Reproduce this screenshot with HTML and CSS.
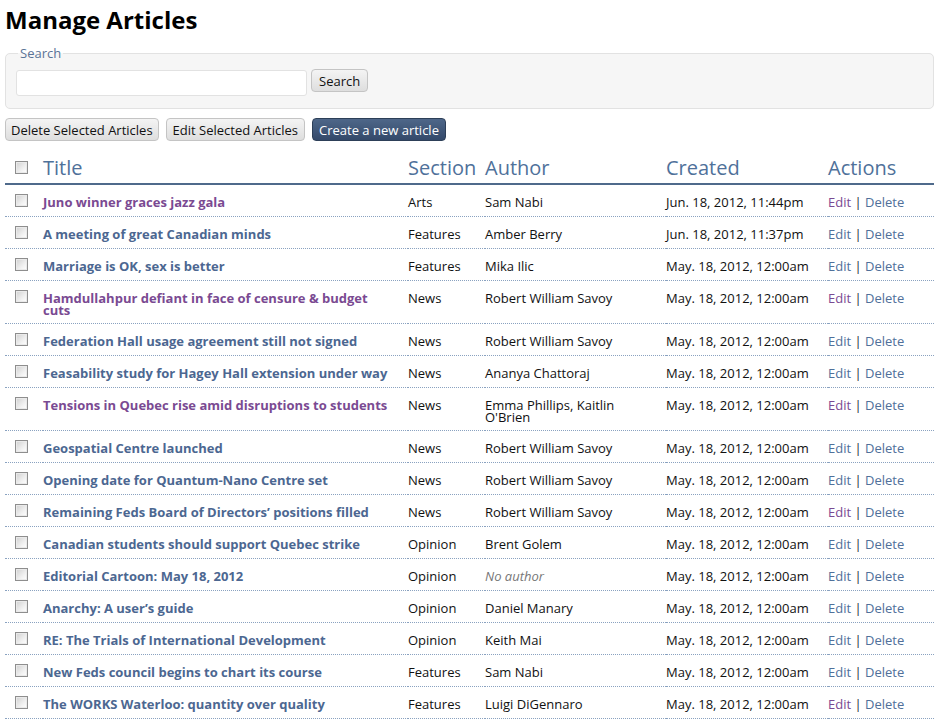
FILE: index.html
```html
<!DOCTYPE html>
<html>
<head>
<meta charset="utf-8">
<title>Manage Articles</title>
<link rel="stylesheet" href="styles.css">
</head>
<body>
<h1 class="page-title">Manage Articles</h1>
<fieldset class="search">
  <legend class="search-legend">Search</legend>
  <div class="search-row">
    <input class="search-input" type="text">
    <button class="btn btn-search" type="button">Search</button>
  </div>
</fieldset>
<div class="toolbar">
  <button class="btn btn-delete" type="button">Delete Selected Articles</button>
  <button class="btn" type="button">Edit Selected Articles</button>
  <button class="btn btn-primary" type="button">Create a new article</button>
</div>
<table class="articles">
  <colgroup>
    <col class="c-check"><col class="c-title"><col class="c-section"><col class="c-author"><col class="c-created"><col class="c-actions">
  </colgroup>
  <thead>
    <tr>
      <th class="cb-cell"><input class="cb" type="checkbox"></th>
      <th>Title</th><th>Section</th><th>Author</th><th>Created</th><th>Actions</th>
    </tr>
  </thead>
  <tbody>
    <tr><td class="cb-cell"><input class="cb" type="checkbox"></td><td><a class="title visited" href="#">Juno winner graces jazz gala</a></td><td>Arts</td><td>Sam Nabi</td><td>Jun. 18, 2012, 11:44pm</td><td><a class="act visited" href="#">Edit</a> <span class="pipe">|</span> <a class="act" href="#">Delete</a></td></tr>
    <tr><td class="cb-cell"><input class="cb" type="checkbox"></td><td><a class="title" href="#">A meeting of great Canadian minds</a></td><td>Features</td><td>Amber Berry</td><td>Jun. 18, 2012, 11:37pm</td><td><a class="act" href="#">Edit</a> <span class="pipe">|</span> <a class="act" href="#">Delete</a></td></tr>
    <tr><td class="cb-cell"><input class="cb" type="checkbox"></td><td><a class="title" href="#">Marriage is OK, sex is better</a></td><td>Features</td><td>Mika Ilic</td><td>May. 18, 2012, 12:00am</td><td><a class="act" href="#">Edit</a> <span class="pipe">|</span> <a class="act" href="#">Delete</a></td></tr>
    <tr><td class="cb-cell"><input class="cb" type="checkbox"></td><td><a class="title visited" href="#">Hamdullahpur defiant in face of censure &amp; budget cuts</a></td><td>News</td><td>Robert William Savoy</td><td>May. 18, 2012, 12:00am</td><td><a class="act visited" href="#">Edit</a> <span class="pipe">|</span> <a class="act" href="#">Delete</a></td></tr>
    <tr><td class="cb-cell"><input class="cb" type="checkbox"></td><td><a class="title" href="#">Federation Hall usage agreement still not signed</a></td><td>News</td><td>Robert William Savoy</td><td>May. 18, 2012, 12:00am</td><td><a class="act" href="#">Edit</a> <span class="pipe">|</span> <a class="act" href="#">Delete</a></td></tr>
    <tr><td class="cb-cell"><input class="cb" type="checkbox"></td><td><a class="title" href="#">Feasability study for Hagey Hall extension under way</a></td><td>News</td><td>Ananya Chattoraj</td><td>May. 18, 2012, 12:00am</td><td><a class="act" href="#">Edit</a> <span class="pipe">|</span> <a class="act" href="#">Delete</a></td></tr>
    <tr><td class="cb-cell"><input class="cb" type="checkbox"></td><td><a class="title visited" href="#">Tensions in Quebec rise amid disruptions to students</a></td><td>News</td><td>Emma Phillips, Kaitlin O'Brien</td><td>May. 18, 2012, 12:00am</td><td><a class="act visited" href="#">Edit</a> <span class="pipe">|</span> <a class="act" href="#">Delete</a></td></tr>
    <tr><td class="cb-cell"><input class="cb" type="checkbox"></td><td><a class="title" href="#">Geospatial Centre launched</a></td><td>News</td><td>Robert William Savoy</td><td>May. 18, 2012, 12:00am</td><td><a class="act" href="#">Edit</a> <span class="pipe">|</span> <a class="act" href="#">Delete</a></td></tr>
    <tr><td class="cb-cell"><input class="cb" type="checkbox"></td><td><a class="title" href="#">Opening date for Quantum-Nano Centre set</a></td><td>News</td><td>Robert William Savoy</td><td>May. 18, 2012, 12:00am</td><td><a class="act" href="#">Edit</a> <span class="pipe">|</span> <a class="act" href="#">Delete</a></td></tr>
    <tr><td class="cb-cell"><input class="cb" type="checkbox"></td><td><a class="title" href="#">Remaining Feds Board of Directors’ positions filled</a></td><td>News</td><td>Robert William Savoy</td><td>May. 18, 2012, 12:00am</td><td><a class="act visited" href="#">Edit</a> <span class="pipe">|</span> <a class="act" href="#">Delete</a></td></tr>
    <tr><td class="cb-cell"><input class="cb" type="checkbox"></td><td><a class="title" href="#">Canadian students should support Quebec strike</a></td><td>Opinion</td><td>Brent Golem</td><td>May. 18, 2012, 12:00am</td><td><a class="act" href="#">Edit</a> <span class="pipe">|</span> <a class="act" href="#">Delete</a></td></tr>
    <tr><td class="cb-cell"><input class="cb" type="checkbox"></td><td><a class="title" href="#">Editorial Cartoon: May 18, 2012</a></td><td>Opinion</td><td><em class="no-author">No author</em></td><td>May. 18, 2012, 12:00am</td><td><a class="act" href="#">Edit</a> <span class="pipe">|</span> <a class="act" href="#">Delete</a></td></tr>
    <tr><td class="cb-cell"><input class="cb" type="checkbox"></td><td><a class="title" href="#">Anarchy: A user’s guide</a></td><td>Opinion</td><td>Daniel Manary</td><td>May. 18, 2012, 12:00am</td><td><a class="act" href="#">Edit</a> <span class="pipe">|</span> <a class="act" href="#">Delete</a></td></tr>
    <tr><td class="cb-cell"><input class="cb" type="checkbox"></td><td><a class="title" href="#">RE: The Trials of International Development</a></td><td>Opinion</td><td>Keith Mai</td><td>May. 18, 2012, 12:00am</td><td><a class="act" href="#">Edit</a> <span class="pipe">|</span> <a class="act" href="#">Delete</a></td></tr>
    <tr><td class="cb-cell"><input class="cb" type="checkbox"></td><td><a class="title" href="#">New Feds council begins to chart its course</a></td><td>Features</td><td>Sam Nabi</td><td>May. 18, 2012, 12:00am</td><td><a class="act" href="#">Edit</a> <span class="pipe">|</span> <a class="act" href="#">Delete</a></td></tr>
    <tr><td class="cb-cell"><input class="cb" type="checkbox"></td><td><a class="title" href="#">The WORKS Waterloo: quantity over quality</a></td><td>Features</td><td>Luigi DiGennaro</td><td>May. 18, 2012, 12:00am</td><td><a class="act visited" href="#">Edit</a> <span class="pipe">|</span> <a class="act" href="#">Delete</a></td></tr>
  </tbody>
</table>
</body>
</html>
```

FILE: styles.css
```css
html, body {
  margin: 0;
  padding: 0;
  background: #fff;
}
body {
  padding: 4px 5px 0 5px;
  font-family: "Open Sans", "DejaVu Sans", sans-serif;
  font-size: 13px;
  color: #111;
}
.page-title {
  margin: 0 0 8px 0;
  font-size: 24px;
  line-height: 32px;
  font-weight: 700;
  color: #000;
}
.search {
  margin: 0;
  padding: 8px 10px 12px 10px;
  border: 1px solid #e2e2e2;
  border-radius: 5px;
  background: #f6f6f6;
}
.search-legend {
  padding: 0 2px;
  margin-left: 2px;
  font-size: 13px;
  line-height: 18px;
  color: #5a7396;
}
.search-row {
  display: flex;
  align-items: flex-start;
  gap: 4px;
}
.search-input {
  box-sizing: border-box;
  width: 291px;
  height: 26px;
  margin: 0;
  border: 1px solid #e2e2e2;
  border-radius: 3px;
  background: #fff;
  font-family: inherit;
  font-size: 13px;
}
.btn {
  box-sizing: border-box;
  height: 23px;
  margin: 0;
  padding: 0 6px;
  border: 1px solid #c4c4c4;
  border-radius: 4px;
  background: linear-gradient(#f4f4f4, #dedede);
  font-family: "Open Sans", "DejaVu Sans", sans-serif;
  font-size: 13px;
  line-height: 20px;
  color: #111;
}
.btn-delete {
  padding: 0 5px;
}
.btn-search {
  margin-top: -1px;
  padding: 0 7px;
}
.btn-primary {
  border-color: #2d3f58;
  background: linear-gradient(#4e6789, #34496a);
  color: #fff;
}
.toolbar {
  display: flex;
  gap: 7px;
  margin-top: 9px;
}
.articles {
  width: 929px;
  table-layout: fixed;
  border-collapse: collapse;
  border-spacing: 0;
}
.c-check { width: 38px; }
.c-title { width: 365px; }
.c-section { width: 77px; }
.c-author { width: 181px; }
.c-created { width: 162px; }
.c-actions { width: 106px; }
.articles th {
  padding: 15px 0 3px 0;
  text-align: left;
  font-weight: 400;
  font-size: 20px;
  line-height: 24px;
  color: #4f719a;
  border-bottom: 2px solid #4f6a8b;
  vertical-align: bottom;
}
.articles td {
  padding: 11px 12px 7px 0;
  line-height: 12px;
  vertical-align: top;
  border-bottom: 1px dotted #8aa2c0;
}
.articles td:nth-child(4) {
  padding-right: 30px;
}
.articles td.cb-cell {
  padding-top: 9px;
  padding-bottom: 9px;
}
.cb-cell {
  padding-left: 10px !important;
}
.cb {
  appearance: none;
  -webkit-appearance: none;
  display: block;
  box-sizing: border-box;
  width: 13px;
  height: 13px;
  margin: 0;
  border: 1px solid #8e8e8e;
  background: linear-gradient(135deg, #d0d0d0, #f2f2f2 65%, #fff);
  box-shadow: inset 0 0 0 1px #eaeaea;
}
.articles th .cb {
  margin-bottom: 6px;
}
a {
  text-decoration: none;
}
.title {
  font-weight: 700;
  color: #4c6791;
}
.title.visited {
  color: #7a4a92;
}
.act {
  color: #50709a;
}
.act.visited {
  color: #7a4a92;
}
.pipe {
  color: #1a1a3a;
}
.no-author {
  color: #777;
}
```
